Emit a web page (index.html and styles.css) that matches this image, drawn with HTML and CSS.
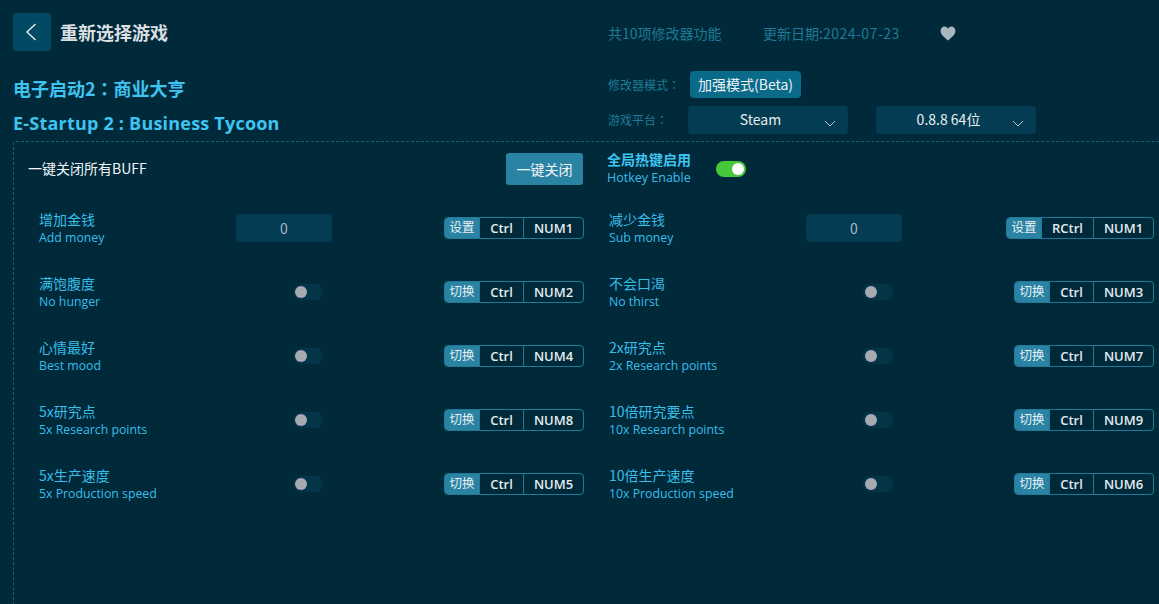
FILE: index.html
```html
<!DOCTYPE html>
<html lang="zh-CN">
<head>
<meta charset="utf-8">
<title>重新选择游戏</title>
<link rel="stylesheet" href="styles.css">
</head>
<body>
<div class="page">
  <header class="top">
    <div class="top-left">
      <div class="back-row">
        <button class="back"><svg width="14" height="20" viewBox="0 0 14 20"><path d="M11.5 2 3 10l8.500 8" fill="none" stroke="#dfe8ec" stroke-width="1.500"/></svg></button>
        <span class="back-label">重新选择游戏</span>
      </div>
      <h1 class="title-cn" lang="zh-TW">电子启动2：商业大亨</h1>
      <h2 class="title-en">E-Startup 2 : Business Tycoon</h2>
    </div>
    <div class="top-right">
      <div class="meta">
        <span class="meta-count">共10项修改器功能</span>
        <span class="meta-date">更新日期:<span class="date-value">2024-07-23</span></span>
        <svg class="heart" width="16" height="15" viewBox="0 0 16 15"><path d="M8 14.500C5 11.800.6 9 .6 4.800.6 2.300 2.400.6 4.400.6 5.900.6 7.200 1.400 8 2.700 8.800 1.400 10.100.6 11.600.6c2 0 3.800 1.700 3.800 4.200C15.400 9 11 11.800 8 14.500z" fill="#a9b6bd"/></svg>
      </div>
      <div class="mode-row">
        <span class="field-label" lang="zh-TW">修改器模式：</span>
        <span class="mode-pill">加强模式(Beta)</span>
      </div>
      <div class="platform-row">
        <span class="field-label" lang="zh-TW">游戏平台：</span>
        <div class="select select-first"><span>Steam</span><svg class="chev" width="12" height="7" viewBox="0 0 12 7"><path d="M1 1l5 5 5-5" fill="none" stroke="#b4c4cc" stroke-width="1"/></svg></div>
        <div class="select"><span>0.8.8 64位</span><svg class="chev" width="12" height="7" viewBox="0 0 12 7"><path d="M1 1l5 5 5-5" fill="none" stroke="#b4c4cc" stroke-width="1"/></svg></div>
      </div>
    </div>
  </header>

  <section class="panel">
    <div class="panel-head">
      <span class="close-all-label">一键关闭所有BUFF</span>
      <button class="close-all">一键关闭</button>
      <div class="hotkey">
        <div class="hotkey-cn">全局热键启用</div>
        <div class="hotkey-en">Hotkey Enable</div>
      </div>
      <span class="switch-on"></span>
    </div>

    <div class="grid">
      <div class="row">
        <div class="name"><div class="cn">增加金钱</div><div class="en">Add money</div></div>
        <div class="control"><div class="num">0</div></div>
        <div class="keys"><span class="key-act">设置</span><span class="key key-ctrl">Ctrl</span><span class="key key-num">NUM1</span></div>
      </div>
      <div class="row">
        <div class="name"><div class="cn">减少金钱</div><div class="en">Sub money</div></div>
        <div class="control"><div class="num">0</div></div>
        <div class="keys"><span class="key-act">设置</span><span class="key key-rctrl">RCtrl</span><span class="key key-num">NUM1</span></div>
      </div>
      <div class="row">
        <div class="name"><div class="cn">满饱腹度</div><div class="en">No hunger</div></div>
        <div class="control"><span class="switch"></span></div>
        <div class="keys"><span class="key-act">切换</span><span class="key key-ctrl">Ctrl</span><span class="key key-num">NUM2</span></div>
      </div>
      <div class="row">
        <div class="name"><div class="cn">不会口渴</div><div class="en">No thirst</div></div>
        <div class="control"><span class="switch"></span></div>
        <div class="keys"><span class="key-act">切换</span><span class="key key-ctrl">Ctrl</span><span class="key key-num">NUM3</span></div>
      </div>
      <div class="row">
        <div class="name"><div class="cn">心情最好</div><div class="en">Best mood</div></div>
        <div class="control"><span class="switch"></span></div>
        <div class="keys"><span class="key-act">切换</span><span class="key key-ctrl">Ctrl</span><span class="key key-num">NUM4</span></div>
      </div>
      <div class="row">
        <div class="name"><div class="cn">2x研究点</div><div class="en">2x Research points</div></div>
        <div class="control"><span class="switch"></span></div>
        <div class="keys"><span class="key-act">切换</span><span class="key key-ctrl">Ctrl</span><span class="key key-num">NUM7</span></div>
      </div>
      <div class="row">
        <div class="name"><div class="cn">5x研究点</div><div class="en">5x Research points</div></div>
        <div class="control"><span class="switch"></span></div>
        <div class="keys"><span class="key-act">切换</span><span class="key key-ctrl">Ctrl</span><span class="key key-num">NUM8</span></div>
      </div>
      <div class="row">
        <div class="name"><div class="cn">10倍研究要点</div><div class="en">10x Research points</div></div>
        <div class="control"><span class="switch"></span></div>
        <div class="keys"><span class="key-act">切换</span><span class="key key-ctrl">Ctrl</span><span class="key key-num">NUM9</span></div>
      </div>
      <div class="row">
        <div class="name"><div class="cn">5x生产速度</div><div class="en">5x Production speed</div></div>
        <div class="control"><span class="switch"></span></div>
        <div class="keys"><span class="key-act">切换</span><span class="key key-ctrl">Ctrl</span><span class="key key-num">NUM5</span></div>
      </div>
      <div class="row">
        <div class="name"><div class="cn">10倍生产速度</div><div class="en">10x Production speed</div></div>
        <div class="control"><span class="switch"></span></div>
        <div class="keys"><span class="key-act">切换</span><span class="key key-ctrl">Ctrl</span><span class="key key-num">NUM6</span></div>
      </div>
    </div>
  </section>
</div>
</body>
</html>
```
FILE: styles.css
```css
* { box-sizing: border-box; }
html, body { margin: 0; height: 100%; overflow: hidden; }
body {
  background: #002a3a;
  color: #fff;
  font-family: "Noto Sans CJK SC", "Open Sans", sans-serif;
  font-size: 13px;
}
.page { width: 1159px; height: 604px; padding: 13px 0 0 13px; display: flex; flex-direction: column; }
.top { display: flex; height: 128px; }
.top-left { width: 595px; }
.back-row { display: flex; align-items: center; height: 38px; }
.back {
  width: 38px; height: 38px; border: 0; border-radius: 4px; background: #014a63;
  display: flex; align-items: center; justify-content: center; padding: 0 2px 0 0;
}
.back-label { margin-left: 9px; font-size: 18px; font-weight: 700; color: #d9dfe2; line-height: 38px; }
.title-cn { margin: 23px 0 0; font-family: "Noto Sans CJK TC", sans-serif; font-size: 18px; line-height: 28px; font-weight: 700; color: #3ec4f0; }
.title-en { margin: 8px 0 0; font-family: "Open Sans", "Noto Sans CJK SC", sans-serif; font-size: 18px; line-height: 26px; font-weight: 700; letter-spacing: .21px; color: #3ec4f0; }
.top-right { flex: 1; }
.meta { display: flex; align-items: center; height: 40px; color: #1f7a98; font-size: 14px; }
.meta-count { width: 155px; }
.meta-date { width: 177px; }
.date-value { letter-spacing: .5px; }
.heart { display: block; }
.mode-row { display: flex; align-items: center; height: 28px; margin-top: 17px; }
.field-label { width: 82px; font-family: "Noto Sans CJK TC", sans-serif; font-size: 12px; color: #1f7a98; }
.mode-pill {
  height: 27px; padding: 0 8px; border-radius: 4px; background: #0a6a8a;
  font-size: 14px; line-height: 27px; color: #eef4f6; white-space: nowrap;
}
.platform-row { display: flex; align-items: center; margin-top: 8px; }
.platform-row .field-label { width: 80px; padding-bottom: 2px; }
.select {
  position: relative; width: 160px; height: 28px; border-radius: 4px; background: #043d53;
  display: flex; align-items: center; justify-content: center; padding: 0 15px 2px 0;
  font-size: 14px; color: #e8eef1;
}
.select-first { margin-right: 28px; }
.chev { position: absolute; right: 12px; top: 14px; }
.panel {
  flex: 1; border: 1px dashed #14617a; border-right: 0; border-bottom: 0;
  border-top-left-radius: 3px;
  padding: 11px 0 0 14px;
}
.panel-head { display: flex; align-items: center; height: 32px; }
.close-all-label { width: 478px; color: #f2f6f8; font-size: 14px; line-height: 30px; padding-bottom: 2px; height: 32px; }
.close-all {
  width: 77px; height: 32px; border: 0; border-radius: 3px; background: #2a83a3;
  color: #f2f6f8; font: 14px "Noto Sans CJK SC", sans-serif; padding: 0;
}
.hotkey { margin-left: 24px; width: 109px; }
.hotkey-cn { font-size: 14px; line-height: 17px; font-weight: 700; color: #3ec4f0; }
.hotkey-en { font-family: "Open Sans", sans-serif; font-size: 12.500px; line-height: 20px; color: #39bde9; }
.switch-on {
  position: relative; display: block; width: 30px; height: 16px; border-radius: 8px; background: #45c83a;
}
.switch-on::after {
  content: ""; position: absolute; right: 2px; top: 2px; width: 12px; height: 12px; border-radius: 50%; background: #fff;
}
.grid { display: grid; grid-template-columns: 570px 570px; grid-auto-rows: 64px; margin: 25px 0 0 11px; }
.row { display: flex; align-items: flex-start; padding-right: 25px; }
.name { width: 197px; }
.cn { font-size: 14px; line-height: 18px; color: #39bde9; white-space: nowrap; }
.en { margin-top: 1px; font-family: "Open Sans", sans-serif; font-size: 12.300px; line-height: 18px; color: #39bde9; white-space: nowrap; }
.control { width: 96px; display: flex; justify-content: flex-end; }
.num {
  width: 96px; height: 28px; border-radius: 4px; background: #043d53; color: #a9bac2;
  text-align: center; font-size: 14px; line-height: 28px; margin-top: 4px;
}
.switch {
  position: relative; display: block; width: 30px; height: 16px; border-radius: 8px; background: #043447;
  margin: 10px 9px 0 0;
}
.switch::after {
  content: ""; position: absolute; left: 2px; top: 2px; width: 12px; height: 12px; border-radius: 50%; background: #a5abaf;
}
.keys {
  margin-left: auto; display: flex; height: 22px; border: 1px solid #1f7a98; border-radius: 4px;
  margin-top: 7px; overflow: hidden; font-family: "Open Sans", sans-serif; font-size: 13px; font-weight: 600;
}
.key-act {
  width: 35px; background: #2a83a3; color: #e8f0f3; text-align: center;
  font: 12.500px/20px "Noto Sans CJK SC", sans-serif; margin: -1px 0 -1px -1px; padding-left: 1px;
}
.key { display: block; text-align: center; line-height: 20px; color: #e4ebee; border-left: 1px solid #1f7a98; }
.key-ctrl { width: 44px; }
.key-rctrl { width: 52px; }
.key-num { width: 60px; }
```
